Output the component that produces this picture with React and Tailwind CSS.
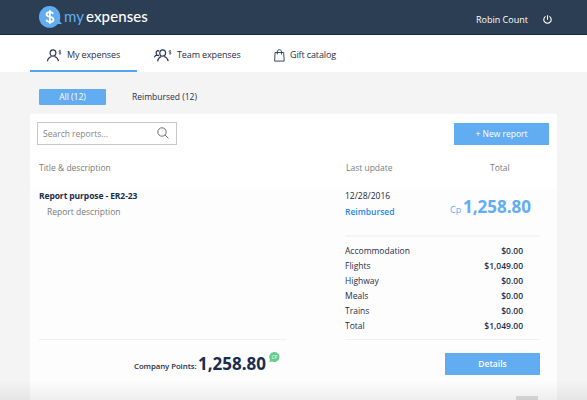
import React from "react";

const expenses = [
  ["Accommodation", "$0.00"],
  ["Flights", "$1,049.00"],
  ["Highway", "$0.00"],
  ["Meals", "$0.00"],
  ["Trains", "$0.00"],
  ["Total", "$1,049.00"],
];

function LogoBubble() {
  return (
    <svg className="h-[22px] w-[24px] shrink-0" viewBox="0 0 24 22" aria-hidden="true">
      <path d="M10.600 0C4.800 0 0 4.800 0 10.900S4.800 21.800 10.600 21.800c3.300 0 6.200-1.500 8.200-3.900 1.200.3 3 .1 4.400-.5-1.200-.4-2-1.300-2.500-2.600.5-1.200.6-2.500.6-3.900C21.300 4.800 16.400 0 10.600 0Z" fill="#62adf2" />
      <path d="M14.100 7.900c-.4-1.100-1.700-1.800-3.300-1.800-1.900 0-3.300.9-3.300 2.400 0 3.300 7 1.500 7 4.900 0 1.500-1.400 2.500-3.500 2.500-1.900 0-3.300-.8-3.700-2.100M10.900 4.200v13.600" fill="none" stroke="#fff" strokeWidth="1.700" />
    </svg>
  );
}

function PersonIcon() {
  return (
    <svg className="h-[13px] w-[15px]" viewBox="0 0 15 13" fill="none" stroke="#26364f" aria-hidden="true">
      <ellipse cx="6" cy="4" rx="2.900" ry="3.200" strokeWidth="1.200" />
      <path d="M.5 12.200C.8 9.600 2 8.400 4.500 7.500M7.500 7.500c2.500.9 3.600 2.100 4 4.700" strokeWidth="1.200" />
      <path d="M14 2.200c-.8-.7-2.200-.4-2.200.4 0 1 2.200.5 2.200 1.500 0 .9-1.500 1-2.300.3M12.900.800v4.900" strokeWidth=".6" />
    </svg>
  );
}

function TeamIcon() {
  return (
    <svg className="h-[13px] w-[18px]" viewBox="0 0 18 13" fill="none" stroke="#26364f" aria-hidden="true">
      <path d="M5.200 2.200C4 1.200 2.200 1.900 2.100 3.800c0 1.200.5 2 1.100 2.400M.4 8.300C.8 7 1.600 6.500 2.800 6.200M3 6.200l2.200.5" strokeWidth="1.200" />
      <ellipse cx="8.700" cy="4" rx="2.900" ry="3.200" strokeWidth="1.200" />
      <path d="M3.600 12.200C3.900 9.600 5 8.400 7.300 7.500M10.200 7.500c2.500.9 3.600 2.100 4 4.700" strokeWidth="1.200" />
      <path d="M17.200 2.200c-.8-.7-2.200-.4-2.200.4 0 1 2.200.5 2.200 1.500 0 .9-1.500 1-2.300.3M16.100.800v4.900" strokeWidth=".6" />
    </svg>
  );
}

function BagIcon() {
  return (
    <svg className="h-[13px] w-[11px]" viewBox="0 0 11 13" fill="none" stroke="#26364f" strokeWidth=".9" aria-hidden="true">
      <path d="M1.100 3.500h8.600l.5 8.600H.6ZM3.300 5.500V3C3.300 1.600 4.100.700 5.400.700S7.500 1.600 7.500 3v2.500" />
    </svg>
  );
}

export default function App() {
  return (
    <div className="relative h-[400px] w-[587px] overflow-hidden bg-[#f4f4f4] font-['Open_Sans',sans-serif] text-[8.5px] leading-[12px] text-[#1f2d49]">
      <header className="flex h-[35px] items-start border-b border-[#16294a] bg-[#2c3e53] pl-[39px] text-[9px]">
        <div className="flex w-[437px] pt-[6px]">
          <LogoBubble />
          <div className="ml-[1px] flex pt-[1px] font-['Lato',sans-serif] text-[15px] leading-[18px]">
            <span className="w-[22px] text-[#62adf2]">my</span>
            <span className="font-medium tracking-[0.100px] text-white">expenses</span>
          </div>
        </div>
        <span className="w-[67px] pt-[14px] text-white">Robin Count</span>
        <svg className="mt-[15px] h-[9px] w-[9px]" viewBox="0 0 9 9" fill="none" stroke="#fff" strokeWidth="1.100" aria-hidden="true">
          <path d="M2.600 1.400a3.700 3.700 0 1 0 3.800 0M4.500.2v4.500" />
        </svg>
      </header>

      <nav className="flex h-[37px] bg-white pl-[30px] text-[9px] tracking-[-0.120px]">
        <div className="flex w-[107px] border-b-2 border-[#52a4ed] pt-[14px] pl-[17px]">
          <PersonIcon />
          <span className="ml-[5px]">My expenses</span>
        </div>
        <div className="flex w-[137px] pt-[14px] pl-[17px]">
          <TeamIcon />
          <span className="ml-[5px]">Team expenses</span>
        </div>
        <div className="flex pt-[14px]">
          <BagIcon />
          <span className="ml-[5px]">Gift catalog</span>
        </div>
      </nav>

      <div className="flex h-[42px] pt-[17px] pl-[39px]">
        <button className="h-[16px] w-[67px] rounded-[1px] bg-[#62adf2] font-medium text-white">All (12)</button>
        <span className="ml-[26px] pt-[2px]">Reimbursed (12)</span>
      </div>

      <main className="ml-[30px] h-[286px] w-[527px] bg-white">
        <div className="flex h-[73px] flex-col">
          <div className="flex h-[48px] justify-between pt-[8px] pr-[8px] pl-[7px]">
            <div className="flex h-[23px] w-[140px] justify-between border border-[#c8c8c8] pt-[5px] pr-[7px] pl-[5px] text-[#858585]">
              <span>Search reports...</span>
              <svg className="-mt-[1px] h-[12px] w-[12px]" viewBox="0 0 12 12" fill="none" stroke="#707070" strokeWidth="1" aria-hidden="true">
                <circle cx="5" cy="5" r="4.200" />
                <path d="m8 8 3.500 3.500" />
              </svg>
            </div>
            <button className="mt-[1px] h-[22px] w-[95px] bg-[#62adf2] font-medium text-white">+ New report</button>
          </div>
          <div className="flex pl-[9px] text-[#7b7b7b]">
            <span className="w-[307px]">Title &amp; description</span>
            <span className="w-[144px]">Last update</span>
            <span>Total</span>
          </div>
        </div>

        <section className="flex h-[213px] bg-[#fdfdfd] pl-[9px]">
          <div className="flex w-[306px] flex-col">
            <div className="h-[153px] w-[247px] border-b border-[#f0f0f0] pt-[3px]">
              <h2 className="font-bold tracking-[-0.100px] text-[#1b2d4d]">Report purpose - ER2-23</h2>
              <p className="mt-[4px] pl-[8px] text-[#7b7b7b]">Report description</p>
            </div>
            <div className="flex w-[247px] pt-[10px]">
              <span className="ml-[95px] w-[64px] shrink-0 pt-[10px] text-[7.8px] leading-[12px] font-semibold tracking-[-0.060px] whitespace-nowrap">Company Points:</span>
              <strong className="w-[71px] shrink-0 pt-[1px] text-[17px] leading-[25px] text-[#1b2d4d]">1,258.80</strong>
              <svg className="mt-[2px] h-[11px] w-[11px] shrink-0" viewBox="0 0 11 11" aria-hidden="true">
                <path d="M5.400 0a5 5 0 1 1-2.100 9.500L.3 10.300 1 7.700A5 5 0 0 1 5.400 0Z" fill="#65cd8c" />
                <text x="5.500" y="6.900" textAnchor="middle" fontSize="4.500" fill="#fff">CP</text>
              </svg>
            </div>
          </div>

          <div className="flex w-[195px] flex-col">
            <div className="flex h-[50px] justify-between border-b-2 border-[#f6f6f6] pt-[3px]">
              <div className="text-[#1b263b]">
                <div>12/28/2016</div>
                <div className="mt-[4px] font-semibold text-[#2489ec]">Reimbursed</div>
              </div>
              <div className="flex w-[90px] pt-[7px] text-[#62adf2]">
                <span className="w-[13px] pt-[7px] text-[9px]">Cp</span>
                <strong className="text-[17px] leading-[20px]">1,258.80</strong>
              </div>
            </div>
            <dl className="h-[103px] border-b border-[#f0f0f0] pt-[8px] pr-[17px]">
              {expenses.map(([label, amount]) => (
                <div className="flex h-[15.100px] justify-between" key={label}>
                  <dt>{label}</dt>
                  <dd className="font-semibold text-[#1b2d4d]">{amount}</dd>
                </div>
              ))}
            </dl>
            <button className="mt-[13px] h-[22px] w-[95px] self-end bg-[#62adf2] font-semibold text-white">Details</button>
            <div className="mt-[21px] mr-[2px] h-[4px] w-[22px] self-end bg-[#ddd]" />
          </div>
        </section>
      </main>
      <div className="pointer-events-none absolute inset-x-0 bottom-0 h-[20px] bg-gradient-to-b from-black/0 to-black/[0.060]" />
    </div>
  );
}
